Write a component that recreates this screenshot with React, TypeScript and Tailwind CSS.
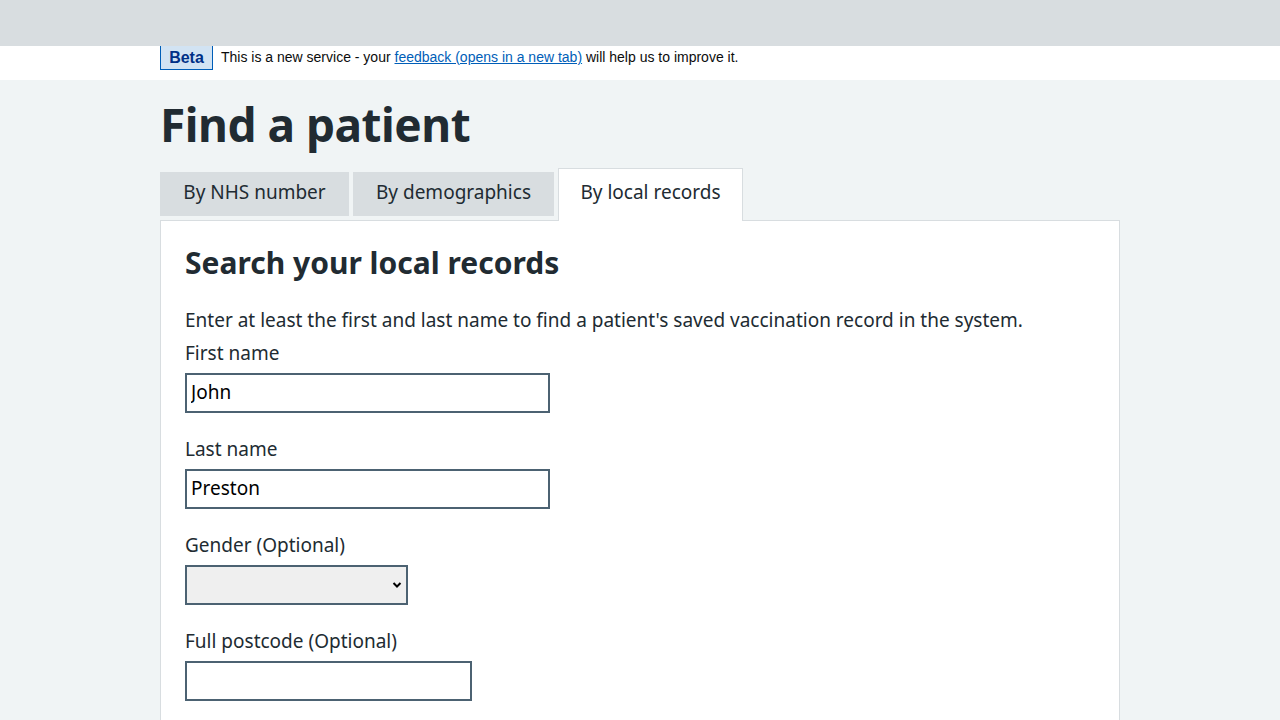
import React from "react";

export default function App() {
  const font = { fontFamily: '"Noto Sans", "Open Sans", sans-serif' };
  const arial = { fontFamily: '"Liberation Sans", Arial, sans-serif' };
  return (
    <div className="min-h-[720px] bg-[#f0f4f5] text-[#212b32]" style={font}>
      <div className="h-[46px] bg-[#d8dde0] relative z-10" />
      <div className="bg-white h-[34px]">
        <div className="mx-auto w-[960px] flex items-start">
          <span
            className="-mt-[6px] h-[30px] w-[53px] flex items-end justify-center pb-[1px] bg-[#d2e3f3] border border-[#005eb8] text-[#003087] font-bold text-[16px] leading-[20px]"
            style={arial}
          >
            Beta
          </span>
          <p className="ml-[8px] mt-[1px] text-[14px] leading-[20px] text-[#0b0c0c]" style={arial}>
            This is a new service - your{" "}
            <a href="#" className="text-[#005eb8] underline">
              feedback (opens in a new tab)
            </a>{" "}
            will help us to improve it.
          </p>
        </div>
      </div>
      <div className="mx-auto w-[960px]">
        <h1 className="pt-[14px] text-[46px] leading-[60px] font-bold tracking-[-0.5px]">Find a patient</h1>
        <div className="mt-[14px] flex items-start gap-[4px]">
          <div className="mt-[4px] w-[189px] h-[44px] bg-[#d8dde0] flex items-center justify-center text-[19px] pb-[3px]">
            By NHS number
          </div>
          <div className="mt-[4px] w-[201px] h-[44px] bg-[#d8dde0] flex items-center justify-center text-[19px] pb-[3px]">
            By demographics
          </div>
          <div className="w-[185px] h-[53px] bg-white border border-b-0 border-[#d8dde0] flex items-start pt-[9px] justify-center text-[19px] relative z-10 -mb-[1px]">
            By local records
          </div>
        </div>
        <div className="bg-white border border-[#d8dde0] px-[24px] pt-[22px] pb-[40px] min-h-[520px]">
          <h2 className="text-[30px] leading-[40px] font-bold">Search your local records</h2>
          <p className="mt-[23px] text-[19px] leading-[28px]">
            Enter at least the first and last name to find a patient's saved vaccination record in the system.
          </p>
          <label className="block mt-[5px] text-[19px] leading-[28px]">First name</label>
          <input
            defaultValue="John"
            className="mt-[6px] block w-[365px] h-[40px] border-2 border-[#4c6272] px-[4px] pb-[2px] text-[19px] text-black bg-white"
          />
          <label className="block mt-[22px] text-[19px] leading-[28px]">Last name</label>
          <input
            defaultValue="Preston"
            className="mt-[6px] block w-[365px] h-[40px] border-2 border-[#4c6272] px-[4px] pb-[2px] text-[19px] text-black bg-white"
          />
          <label className="block mt-[22px] text-[19px] leading-[28px]">Gender (Optional)</label>
          <div className="mt-[6px] relative w-[223px] h-[40px] border-2 border-[#4c6272] bg-[#efefef]">
            <svg className="absolute right-[4px] top-[14px]" width="10" height="8" viewBox="0 0 10 8">
              <path d="M1.5 2 L5 5.5 L8.5 2" fill="none" stroke="black" strokeWidth="2" />
            </svg>
          </div>
          <label className="block mt-[22px] text-[19px] leading-[28px]">Full postcode (Optional)</label>
          <input className="mt-[6px] block w-[287px] h-[40px] border-2 border-[#4c6272] px-[4px] text-[19px] bg-white" />
        </div>
      </div>
    </div>
  );
}
